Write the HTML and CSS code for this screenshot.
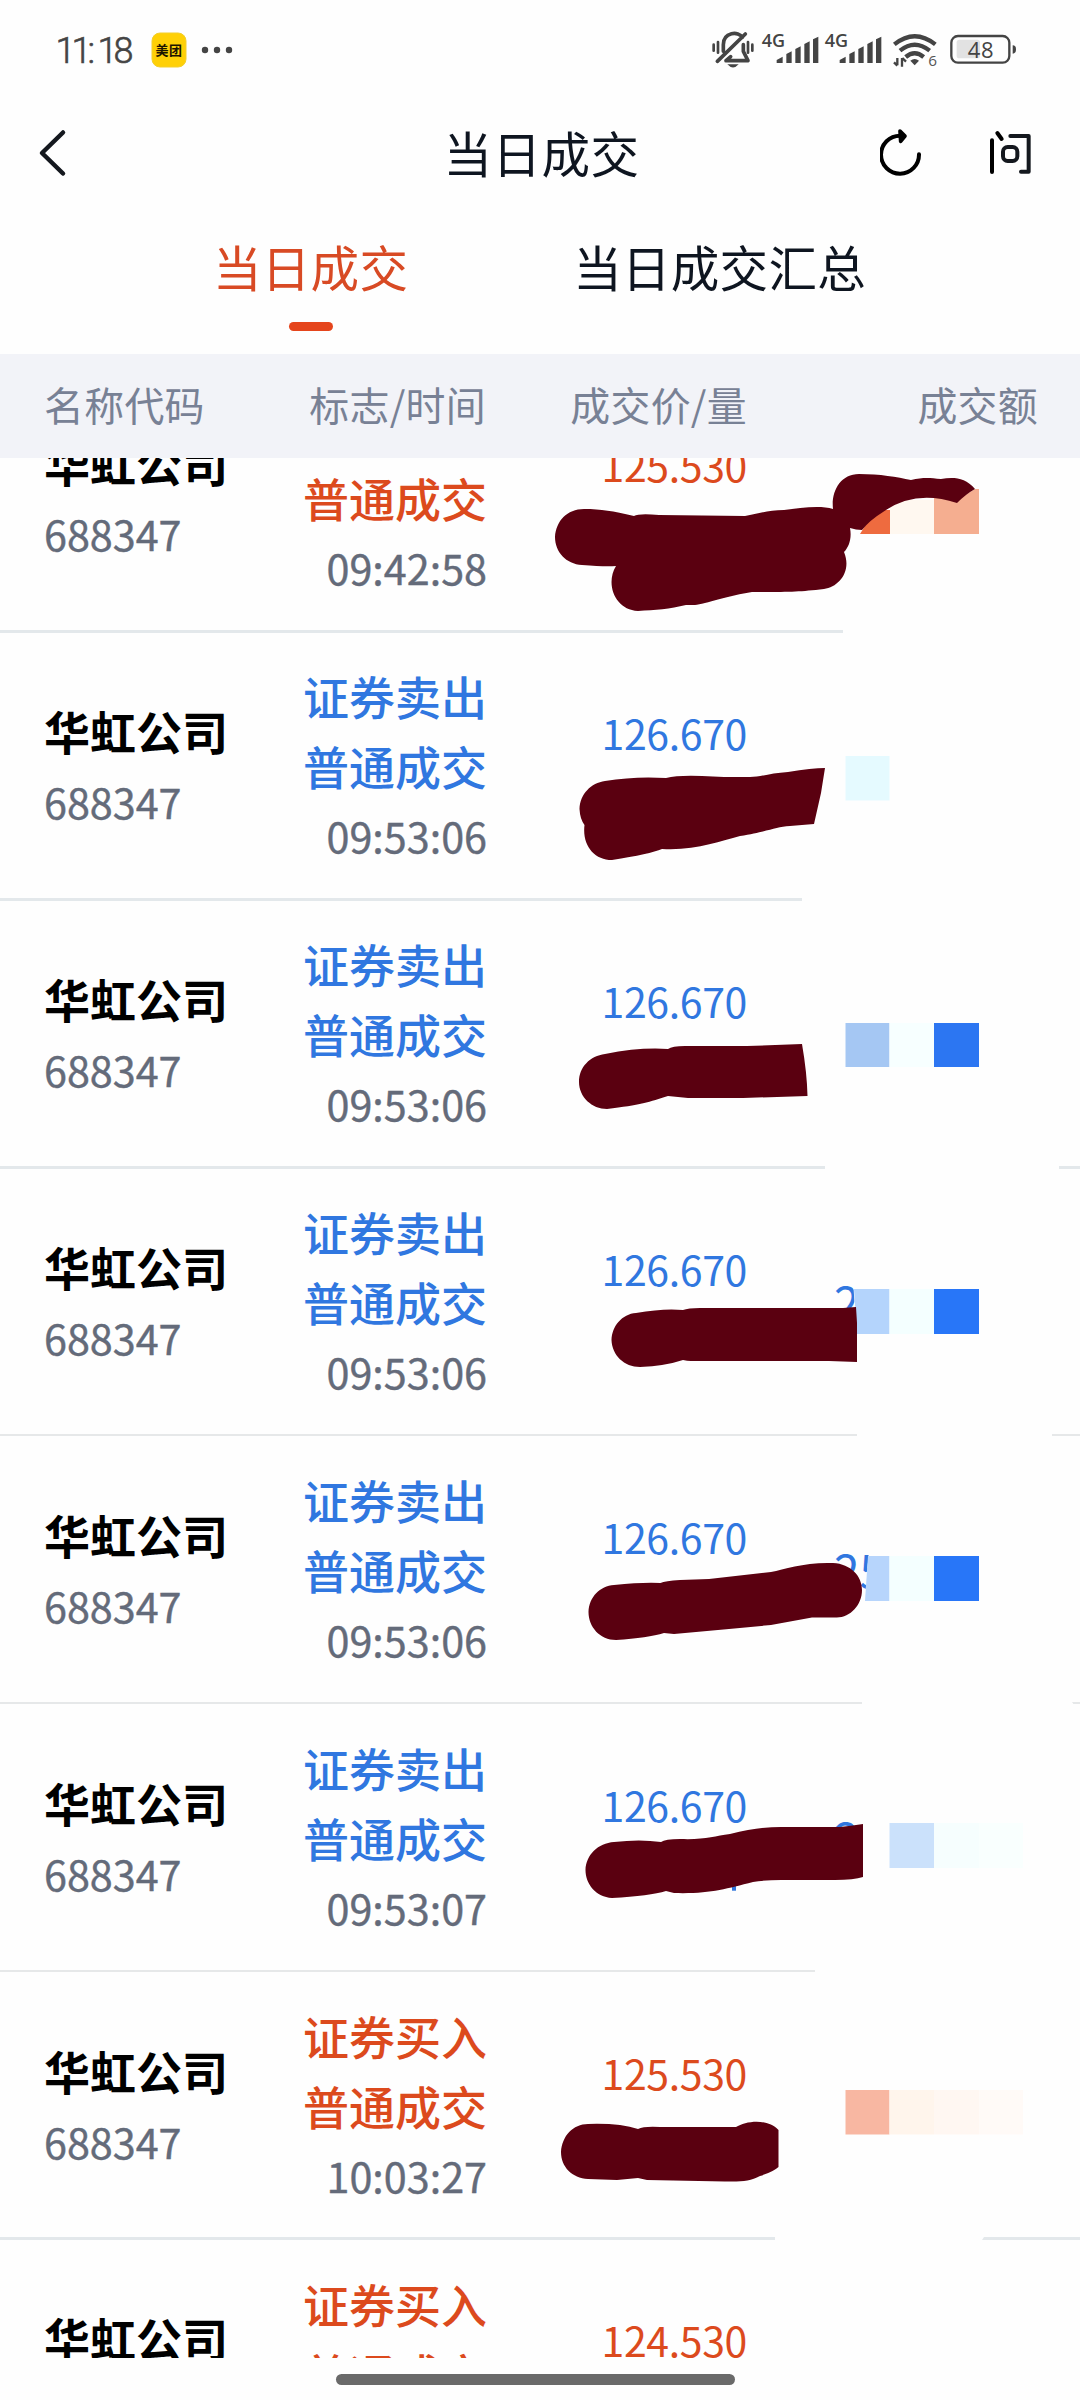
FILE: index.html
```html
<!DOCTYPE html>
<html lang="zh-CN">
<head>
<meta charset="utf-8">
<title>当日成交</title>
<link rel="stylesheet" href="styles.css">
</head>
<body>
<div class="screen">
  <header class="status">
    <svg class="status-left" viewBox="0 0 260 84" width="260" height="84">
      <text class="clock" x="55.500 71.500 87.500 97.500 113.500" y="63">11:18</text>
      <rect x="152" y="33" width="34" height="34" rx="8" fill="#ffd006" stroke="#f3cf2c"/>
      <text class="app" x="155.500 169" y="55">美团</text>
      <g fill="#444"><circle cx="205" cy="50" r="3.200"/><circle cx="217" cy="50" r="3.200"/><circle cx="229" cy="50" r="3.200"/></g>
    </svg>
    <svg class="status-right" viewBox="0 0 1260 252" width="420" height="84">
      <g fill="none" stroke="#444" stroke-width="11" stroke-linecap="round">
        <path d="M190 154V134C190 96 236 92 247 112M172 184L256 102"/>
        <path d="M250 134V154L264 182H198L212 170" stroke-linejoin="round"/>
        <path d="M161 134v18M174 126v32M264 126v32M277 134v18" stroke-width="8"/>
      </g>
      <path d="M202 193H236Q219 212 202 193Z" fill="#444"/>
      <g class="net"><text x="305" y="140">4G</text><text x="494" y="140">4G</text></g>
      <g fill="#444">
        <path d="M350 189V180L368 170V189ZM379 189V162L395 154V189ZM406 189V147L422 139V189ZM433 189V132L449 124V189ZM459 189V118L475 110V189Z"/>
        <path d="M539 189V180L557 170V189ZM568 189V162L584 154V189ZM595 189V147L611 139V189ZM622 189V132L638 124V189ZM648 189V118L664 110V189Z"/>
      </g>
      <g fill="none" stroke="#444" stroke-width="13">
        <path d="M703 133Q764 84 826 133M720 152Q764 116 809 152M737 171Q764 148 791 171"/>
      </g>
      <path d="M751 182Q764 172 777 182L764 196Z" fill="#444"/>
      <path d="M712 174V196M712 197L702 187M726 200V174M727 174L738 185" stroke="#444" stroke-width="7" fill="none"/>
      <text class="six" x="805" y="198">6</text>
      <rect x="890" y="119" width="70" height="56" rx="8" fill="#e2e2e2"/>
      <rect x="874" y="108" width="174" height="80" rx="20" fill="none" stroke="#444" stroke-width="7"/>
      <path d="M1058 136Q1068 136 1068 148Q1068 161 1058 161Z" fill="#444"/>
      <text class="batt" x="923" y="174">48</text>
    </svg>
  </header>
  <nav class="titlebar">
    <svg viewBox="0 0 100 140" width="100" height="140"><path d="M63 48.500L42 69L63 89.500" fill="none" stroke="#14181e" stroke-width="4.500" stroke-linecap="round" stroke-linejoin="round"/></svg>
    <h1>当日成交</h1>
    <svg viewBox="0 0 600 420" width="200" height="140">
      <g fill="none" stroke="#000" stroke-width="12" stroke-linecap="round" stroke-linejoin="round">
        <path d="M117 211A57 57 0 1 1 60 155"/>
        <path d="M60 141L75 156L62 172Z" fill="#000" stroke-width="11"/>
        <path d="M336 169V264M352 147L365 165"/>
      </g>
      <g fill="none" stroke="#14181e" stroke-width="12" stroke-linecap="round" stroke-linejoin="round">
        <path d="M391 156H446V263H423"/><rect x="369" y="189" width="43" height="42" rx="14"/>
      </g>
    </svg>
  </nav>
  <div class="tabs">
    <div class="tab active"><span>当日成交</span></div>
    <div class="tab"><span>当日成交汇总</span></div>
  </div>
  <div class="cols head"><span>名称代码</span><span>标志/时间</span><span>成交价/量</span><span>成交额</span></div>
  <main class="list">
    <div class="cols row buy"><div class="name"><b>华虹公司</b><i>688347</i></div><div class="flag"><b></b><b>普通成交</b><i>09:42:58</i></div><div class="price">125.530</div><div class="amount"></div></div>
    <div class="cols row sell"><div class="name"><b>华虹公司</b><i>688347</i></div><div class="flag"><b>证券卖出</b><b>普通成交</b><i>09:53:06</i></div><div class="price">126.670</div><div class="amount"></div></div>
    <div class="cols row sell"><div class="name"><b>华虹公司</b><i>688347</i></div><div class="flag"><b>证券卖出</b><b>普通成交</b><i>09:53:06</i></div><div class="price">126.670</div><div class="amount"></div></div>
    <div class="cols row sell thin"><div class="name"><b>华虹公司</b><i>688347</i></div><div class="flag"><b>证券卖出</b><b>普通成交</b><i>09:53:06</i></div><div class="price">126.670</div><div class="amount">2</div></div>
    <div class="cols row sell thin"><div class="name"><b>华虹公司</b><i>688347</i></div><div class="flag"><b>证券卖出</b><b>普通成交</b><i>09:53:06</i></div><div class="price">126.670</div><div class="amount">25</div></div>
    <div class="cols row sell thin"><div class="name"><b>华虹公司</b><i>688347</i></div><div class="flag"><b>证券卖出</b><b>普通成交</b><i>09:53:07</i></div><div class="price">126.670</div><div class="amount">2</div></div>
    <div class="cols row buy"><div class="name"><b>华虹公司</b><i>688347</i></div><div class="flag"><b>证券买入</b><b>普通成交</b><i>10:03:27</i></div><div class="price">125.530</div><div class="amount"></div></div>
    <div class="cols row buy"><div class="name"><b>华虹公司</b><i>688347</i></div><div class="flag"><b>证券买入</b><b>普通成交</b><i></i></div><div class="price">124.530</div><div class="amount">24,700.00</div></div>
  </main>
  <footer class="home"><span></span></footer>

  <!-- Redaction layer: erased areas, mosaic tiles and marker strokes -->
  <svg class="redact" viewBox="0 0 1080 2400" width="1080" height="2400">
    <g fill="#fefefe">
      <path d="M843 627H1080V636H843ZM802 895H1080V904H802ZM825 1163H1059V1172H825ZM857 1431H1052V1440H857ZM862 1699H1070L1076 1708H862ZM815 1967H1080V1976H815ZM775 2234H986L980 2243H775Z"/>
      <path d="M853 1280H900V1340H857ZM869 1550H900V1610H864ZM863 1815H900V1885H863Z"/>
    </g>
    <path fill="#ee6b3f" d="M860 534L875 510H890V534Z"/><path fill="#fff8f0" d="M890 500H934V534H890Z"/><path fill="#f5ae90" d="M934 495L957 500L975 489H979V534H934Z"/>
    <path fill="#e5faff" d="M845.500 756h44v44.500h-44z"/>
    <path fill="#a5c7f3" d="M845.500 1023h44v44h-44z"/><path fill="#f7ffff" d="M889.500 1023h44.500v44h-44.500z"/><path fill="#2c76f2" d="M934 1023h45v44h-45z"/>
    <path fill="#b4d4fc" d="M854 1289H889.500V1334H857Z"/><path fill="#f4ffff" d="M889.500 1289h44.500v45h-44.500z"/><path fill="#2876f8" d="M934 1289h45v45h-45z"/>
    <path fill="#b7d5fc" d="M868 1556H889.500V1601H865Z"/><path fill="#f4ffff" d="M889.500 1556h44.500v45h-44.500z"/><path fill="#2876f8" d="M934 1556h45v45h-45z"/>
    <path fill="#cbe1fb" d="M889.500 1823h44.500v45h-44.500z"/><path fill="#f6fefe" d="M934 1823h45v45h-45z"/><path fill="#f9fffe" d="M979 1823h44v45h-44z"/>
    <path fill="#f8b7a2" d="M845.500 2090h44v44.500h-44z"/><path fill="#fff5ec" d="M889.500 2090h44.500v44.500h-44.500z"/><path fill="#fff7f2" d="M934 2090h45v44.500h-45z"/><path fill="#fffaf7" d="M979 2090h44v44.500h-44z"/>
    <path fill="#3277dc" d="M732 1884h4v6.700h-4z"/>
    <g fill="#5a0010">
      <path d="M555 537C556 521 567 509 584 509C602 509 612 511 634 516Q639 513 659 515L745 516C758 514 768 510 784 510C800 508 820 505 833 509C831 492 840 474 859 474C880 474 897 477 911 480C924 477 930 478 941 479C953 477 965 477 975 489Q966 494 957 503Q915 489 883 512Q870 520 862 530Q856 530 850 528C852 538 849 547 844 552C852 571 839 587 824 589C798 592 790 592 752 592C730 595 705 604 695 605H686C670 609 655 610 638 611C615 610 605 584 616 566Q606 567 582 565C566 564 555 552 555 537Z"/>
      <path d="M579.500 809C580 794 591 783 605 781Q635 776 666 778Q678 775 702 776L724 777L750 777C760 777 771 773 788 772Q812 768 825 768L821 793L814 824L790 826C775 827 770 831 740 836C720 841 695 851 662 849Q650 854 612 860C594 860 582 845 584.500 825Q580 819 579.500 809Z"/>
      <path d="M579 1082C579 1067 590 1056 605 1054Q640 1047 668 1049Q672 1046 685 1046L747 1046L802 1044Q807 1073 807.500 1096L743 1098H688L668 1096C650 1102 640 1105 607 1109C592 1109 579 1097 579 1082Z"/>
      <path d="M611.500 1340C612 1326 622 1314 636 1313Q664 1308 683 1310Q688 1308 700 1308L843 1308L856 1307L857 1323V1362L829 1361H691Q687 1361 683 1360Q665 1366 640 1367C624 1367 612 1355 611.500 1340Z"/>
      <path d="M588.500 1612C589 1597 600 1586 614 1585Q643 1582 660.500 1583Q665 1581 680 1580L709 1579L771 1572C785 1569 805 1562 833 1563C851 1564 862 1576 862 1590C862 1605 850 1618 836 1617.500H812L771 1625L729 1629L674 1634L664 1633Q648 1638 616 1640C600 1640 588.500 1627 588.500 1612Z"/>
      <path d="M585.500 1870C586 1855 598 1843 614 1842Q640 1839 661 1842Q665 1839 680 1839C705 1840 714 1836 730 1834C750 1829 765 1827 781 1827H840Q850 1826 863 1824V1877Q854 1880 835 1880H781Q765 1880 753 1882C725 1889 710 1894 674 1893L666 1891Q650 1896 612 1898C596 1897 585.500 1884 585.500 1870Z"/>
      <path d="M561 2152C562 2136 573 2124 588 2124Q620 2123 638 2129Q644 2126 660 2127L736 2127C746 2121 767 2118 778.500 2130V2167Q773 2172 760 2176C750 2181 742 2182 725 2181.500L647 2180L638 2178L617 2180L588 2179C572 2178 561 2167 561 2152Z"/>
    </g>
  </svg>
</div>
</body>
</html>
```
FILE: styles.css
```css
* { box-sizing: border-box; }
body { margin: 0; background: #fefefe; font-family: "Noto Sans CJK SC", sans-serif; }
b, i, h1 { font-style: normal; margin: 0; }
svg { display: block; flex: none; }
.screen { position: relative; width: 1080px; height: 2400px; overflow: hidden; display: flex; flex-direction: column; }

.status { height: 84px; flex: none; display: flex; justify-content: space-between; }
.clock { font: 300 36px Roboto, sans-serif; fill: #444; stroke: #444; stroke-width: .6px; }
.app { font: 700 13px "Noto Sans CJK SC", sans-serif; fill: #1c1400; }
.net { font: 600 54px "Open Sans", sans-serif; fill: #444; }
.six { font: 400 46px "Open Sans", sans-serif; fill: #555; }
.batt { font: 400 66px "Open Sans", sans-serif; fill: #444; letter-spacing: 2px; }

.titlebar { height: 140px; flex: none; display: grid; grid-template-columns: 200px 1fr 200px; }
.titlebar h1 { font-size: 48.500px; letter-spacing: .5px; font-weight: 400; line-height: 136px; text-align: center; color: #0e1520; padding-left: 3px; }

.tabs { height: 130px; flex: none; display: flex; gap: 165px; padding-left: 213px; }
.tab { font-size: 48.500px; letter-spacing: .3px; line-height: 84px; color: #0e1520; display: flex; flex-direction: column; align-items: center; }
.active { color: #d84a24; }
.active::after { content: ""; width: 44px; height: 9px; border-radius: 4.500px; background: #e5451c; margin-top: 14px; }

.cols { display: grid; grid-template-columns: 242px 200px 261px 291px; padding-left: 44px; flex: none; }
.cols > * { text-align: right; }
.cols > :first-child { text-align: left; }
.head { height: 104px; background: #f2f3f8; color: #788195; font-size: 39.900px; letter-spacing: .3px; line-height: 100px; }

.list { height: 1900px; flex: none; overflow: hidden; background: #fefefe; }
.row { height: 268px; border-bottom: 3px solid #e3e8eb; align-items: center; }
.row:first-child { margin-top: -93px; }
.row:nth-child(7) { height: 267px; }
.row:nth-child(n+7) { padding-top: 1px; }
.thin { height: 267px; border-bottom: 2px solid #e6e8e9; margin-bottom: 1px; }
.name b, .name i { display: block; line-height: 71px; }
.name b { font-size: 46px; font-weight: 700; color: #000; min-height: 71px; }
i { font-size: 41.300px; color: #646b7a; -webkit-text-stroke: .4px #646b7a; min-height: 70px; }
.flag { margin-right: -1px; padding-bottom: 1px; }
.flag b, .flag i { display: block; line-height: 70px; min-height: 70px; }
.flag b { font-size: 46px; font-weight: 500; }
.price { font-size: 41px; letter-spacing: -.35px; line-height: 67px; padding-bottom: 67px; }
.amount { font-size: 46px; line-height: 67px; text-align: left !important; padding-left: 87px; }
.row:last-child .amount { padding-top: 2px; }
.buy { color: #dc4a1d; }
.sell { color: #3077e0; }

.home { flex: 1; display: flex; justify-content: center; padding-top: 16px; padding-right: 9px; }
.home span { width: 399px; height: 11px; border-radius: 6px; background: #6a6a6a; }

.redact { position: absolute; left: 0; top: 0; }
```
